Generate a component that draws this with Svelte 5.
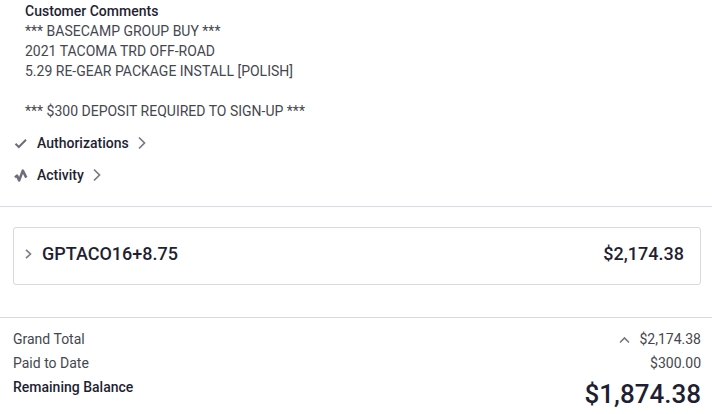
<script>
  const comments = `*** BASECAMP GROUP BUY ***
2021 TACOMA TRD OFF-ROAD
5.29 RE-GEAR PACKAGE INSTALL [POLISH]

*** $300 DEPOSIT REQUIRED TO SIGN-UP ***`;
</script>

<main>
  <section class="notes">
    <div class="comments">
      <h2>Customer Comments</h2>
      <p>{comments}</p>
    </div>
    <button class="link" type="button">
      <svg width="14" height="14" viewBox="0 0 14 14"><path d="M1.5 7.8L4.8 11L12 3.8" /></svg>
      <span>Authorizations</span>
      <svg class="arrow" width="8" height="14" viewBox="0 0 8 14"><path d="M1 1.5L6.5 7L1 12.5" /></svg>
    </button>
    <button class="link" type="button">
      <svg class="pulse" width="14" height="14" viewBox="0 0 14 14"><path d="M1 9.4L3 7.6L5.2 12.4L8.8 2.6L12.3 9.6" /></svg>
      <span>Activity</span>
      <svg class="arrow" width="8" height="14" viewBox="0 0 8 14"><path d="M1 1.5L6.5 7L1 12.5" /></svg>
    </button>
  </section>

  <section class="jobs">
    <button class="job" type="button">
      <svg class="small" width="8" height="10" viewBox="0 0 8 10"><path d="M1 0.8L5.5 5L1 9.2" /></svg>
      <span>GPTACO16+8.75</span>
      <span class="price">$2,174.38</span>
    </button>
  </section>

  <dl>
    <div class="row">
      <dt>Grand Total</dt>
      <dd>
        <button class="toggle" type="button" aria-label="Collapse totals">
          <svg class="small" width="10" height="8" viewBox="0 0 10 8"><path d="M1 7.5L5.5 3L10 7.5" /></svg>
        </button>
        $2,174.38
      </dd>
    </div>
    <div class="row">
      <dt>Paid to Date</dt>
      <dd>$300.00</dd>
    </div>
    <div class="row balance">
      <dt>Remaining Balance</dt>
      <dd>$1,874.38</dd>
    </div>
  </dl>
</main>

<style>
  :global(body) {
    background: #fff;
  }
  main {
    font-family: Roboto, "Liberation Sans", sans-serif;
    font-size: 14px;
    line-height: 20px;
    color: #45474f;
  }
  h2, p, dl, dt, dd {
    margin: 0;
  }
  button {
    padding: 0;
    border: 0;
    background: none;
    font: inherit;
    color: #1f1f33;
    cursor: pointer;
  }
  svg {
    flex: none;
    fill: none;
    stroke: #6c6e7a;
    stroke-width: 2;
    overflow: visible;
  }
  .notes {
    display: flex;
    flex-direction: column;
    align-items: flex-start;
    gap: 12px;
    padding: 1px 14px 21px;
    border-bottom: 1px solid #d8d9e2;
  }
  .comments {
    padding-left: 11px;
  }
  h2 {
    font-size: 14px;
    font-weight: 500;
    color: #1f1f33;
  }
  p {
    white-space: pre-line;
  }
  .link {
    display: flex;
    align-items: center;
    gap: 9px;
    font-weight: 500;
  }
  .arrow {
    stroke: #777984;
    stroke-width: 1.7;
  }
  .pulse {
    stroke-width: 2.6;
    stroke-linejoin: round;
  }
  .small {
    stroke: #777984;
    stroke-width: 1.6;
  }
  .jobs {
    padding: 20px 11px 32px 13px;
    border-bottom: 1px solid #d8d9dc;
  }
  .job {
    display: flex;
    align-items: center;
    gap: 9px;
    width: 100%;
    padding: 16px 16px 20px 11px;
    border: 1px solid #d8d9dc;
    border-radius: 3px;
    font-size: 18px;
    font-weight: 500;
  }
  .price {
    margin-left: auto;
  }
  dl {
    padding: 9px 11px 0 13px;
  }
  .row {
    display: flex;
    justify-content: space-between;
    line-height: 24px;
  }
  dd {
    display: flex;
    align-items: center;
    gap: 10px;
  }
  .toggle {
    display: flex;
  }
  .balance {
    font-weight: 500;
    color: #1f1f33;
  }
  .balance dd {
    font-size: 26px;
    line-height: 38px;
  }
</style>
